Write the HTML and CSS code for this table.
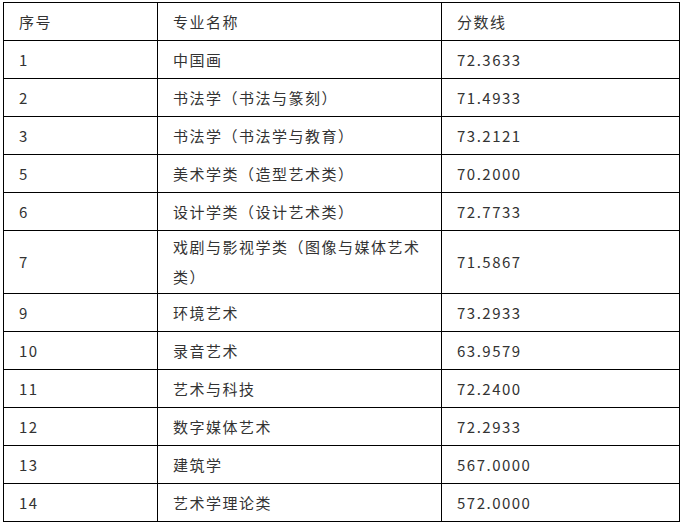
FILE: index.html
```html
<!DOCTYPE html>
<html lang="zh-CN">
<head>
<meta charset="utf-8">
<title>分数线</title>
<link rel="stylesheet" href="styles.css">
</head>
<body>
<table class="score-table">
  <colgroup>
    <col class="col-no">
    <col class="col-name">
    <col class="col-score">
  </colgroup>
  <tbody>
    <tr><td>序号</td><td>专业名称</td><td>分数线</td></tr>
    <tr><td>1</td><td>中国画</td><td>72.3633</td></tr>
    <tr><td>2</td><td>书法学（书法与篆刻）</td><td>71.4933</td></tr>
    <tr><td>3</td><td>书法学（书法学与教育）</td><td>73.2121</td></tr>
    <tr><td>5</td><td>美术学类（造型艺术类）</td><td>70.2000</td></tr>
    <tr><td>6</td><td>设计学类（设计艺术类）</td><td>72.7733</td></tr>
    <tr><td>7</td><td>戏剧与影视学类（图像与媒体艺术类）</td><td>71.5867</td></tr>
    <tr><td>9</td><td>环境艺术</td><td>73.2933</td></tr>
    <tr><td>10</td><td>录音艺术</td><td>63.9579</td></tr>
    <tr><td>11</td><td>艺术与科技</td><td>72.2400</td></tr>
    <tr><td>12</td><td>数字媒体艺术</td><td>72.2933</td></tr>
    <tr><td>13</td><td>建筑学</td><td>567.0000</td></tr>
    <tr><td>14</td><td>艺术学理论类</td><td>572.0000</td></tr>
  </tbody>
</table>
</body>
</html>
```
FILE: styles.css
```css
html, body {
  background: #ffffff;
}
body {
  margin: 2px 0 0 3px;
  font-family: "Noto Sans CJK SC", "Noto Sans", sans-serif;
  font-size: 15px;
  color: #333333;
}
.score-table {
  border-collapse: collapse;
  table-layout: fixed;
  width: 677px;
}
.col-no { width: 154px; }
.col-name { width: 284px; }
.col-score { width: 238px; }
.score-table td {
  border: 1px solid #000000;
  height: 35px;
  padding: 1px 15px;
  line-height: 30px;
  letter-spacing: 1.5px;
  vertical-align: middle;
  text-align: left;
}
```
